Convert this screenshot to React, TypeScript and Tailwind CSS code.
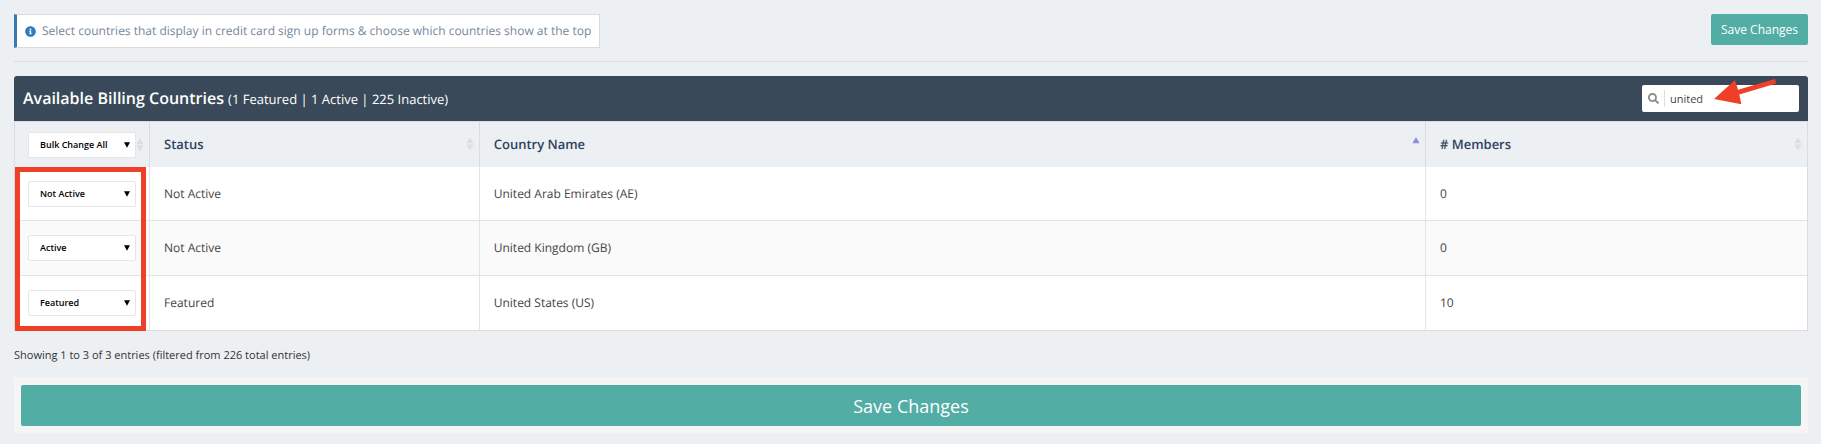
import { useState } from 'react';
import { FaInfoCircle, FaSearch } from 'react-icons/fa';

type Status = 'Not Active' | 'Active' | 'Featured';

interface Country {
  code: string;
  name: string;
  status: Status;
  selected: Status;
  members: number;
}

const statuses: Status[] = ['Not Active', 'Active', 'Featured'];

const countries: Country[] = [
  { code: 'AE', name: 'United Arab Emirates', status: 'Not Active', selected: 'Not Active', members: 0 },
  { code: 'GB', name: 'United Kingdom', status: 'Not Active', selected: 'Active', members: 0 },
  { code: 'US', name: 'United States', status: 'Featured', selected: 'Featured', members: 10 },
];

interface StatusSelectProps {
  label: string;
  options: string[];
  defaultValue: string;
}

function StatusSelect({ label, options, defaultValue }: StatusSelectProps) {
  return (
    <div className="relative w-[108px]">
      <select
        aria-label={label}
        defaultValue={defaultValue}
        className="block h-[26px] w-full appearance-none rounded-xs border border-[#e6e6e6] bg-white pr-5 pl-[11px] text-[9px] font-semibold text-black"
      >
        {options.map((option) => (
          <option key={option}>{option}</option>
        ))}
      </select>
      <svg viewBox="0 0 6 6" className="pointer-events-none absolute top-[10px] right-[6px] h-[6px] w-[6px]">
        <path d="M0 0.3H6L3 5.8Z" fill="#000" />
      </svg>
    </div>
  );
}

function SortIcon({ ascending = false }: { ascending?: boolean }) {
  return (
    <svg viewBox="0 0 8 14" className="h-[14px] w-[8px] shrink-0">
      <path d="M4 0L7.6 6.3H0.4Z" fill={ascending ? '#8b8fe0' : '#dcdee0'} />
      {!ascending && <path d="M0.4 7.5H7.6L4 13.7Z" fill="#dcdee0" />}
    </svg>
  );
}

export default function App() {
  const [search, setSearch] = useState('united');

  return (
    <div className="min-h-screen bg-[#ecf0f3] pt-[14px] pr-[13px] pb-[10px] pl-[14px] font-['Open_Sans',sans-serif] text-xs text-[#444] [text-rendering:geometricPrecision]">
      {/* Hint and save */}
      <div className="flex items-start justify-between border-b border-[#dcdfe2] pb-[13px]">
        <p className="flex h-[34px] items-center gap-[6px] border border-l-3 border-[#dadada] border-l-[#337ab7] bg-white px-2 text-[#75879a]">
          <FaInfoCircle className="h-[11px] w-[11px] text-[#2f7cbf]" />
          Select countries that display in credit card sign up forms &amp; choose which countries show at the top
        </p>
        <button className="h-[31px] rounded-xs bg-[#52ada4] px-[10px] text-xs font-medium text-white">
          Save Changes
        </button>
      </div>

      {/* Countries table */}
      <section className="mt-[14px]">
        <div className="flex h-[45px] items-center justify-between rounded-t-[3px] bg-[#394959] pr-[9px] pl-[9px] text-white">
          <h1 className="pb-[2px] text-base font-semibold">
            Available Billing Countries{' '}
            <small className="text-[13px] font-medium">(1 Featured | 1 Active | 225 Inactive)</small>
          </h1>
          <div className="relative flex h-[27px] w-[157px] items-center rounded-xs bg-white pl-[6px]">
            <FaSearch className="h-[11px] w-[11px] shrink-0 text-[#888]" />
            <input
              type="text"
              aria-label="Search countries"
              value={search}
              onChange={(e) => setSearch(e.target.value)}
              className="ml-[5px] h-[17px] w-full min-w-0 border-l border-[#ddd] pl-[5px] text-[11px] text-[#444] outline-none"
            />
            <svg viewBox="0 0 63 26" className="pointer-events-none absolute -top-[6px] left-[72px] h-[26px] w-[63px]">
              <path d="M0 20L21 1L24 10.8L61 0L62.2 4.5L25.3 15.4L27.4 25.2Z" fill="#ee4027" />
            </svg>
          </div>
        </div>

        <div className="relative">
          <table className="w-full table-fixed border-separate border-spacing-0 border border-[#dadcde] text-left">
            <colgroup>
              <col className="w-[135px]" />
              <col className="w-[18.4%]" />
              <col className="w-[52.8%]" />
              <col />
            </colgroup>
            <thead className="text-[13px] text-[#2f4260]">
              <tr className="h-[45px]">
                <th className="border-r border-[#dadcde] pr-[5px] pl-[13px]">
                  <div className="flex items-center justify-between">
                    <StatusSelect
                      label="Bulk change all countries"
                      options={['Bulk Change All', ...statuses]}
                      defaultValue="Bulk Change All"
                    />
                    <SortIcon />
                  </div>
                </th>
                <th className="border-r border-[#dadcde] pr-[5px] pl-[14px] font-semibold">
                  <div className="flex items-center justify-between">
                    Status
                    <SortIcon />
                  </div>
                </th>
                <th aria-sort="ascending" className="border-r border-[#dadcde] pr-[5px] pl-[14px] font-semibold">
                  <div className="flex items-center justify-between">
                    Country Name
                    <SortIcon ascending />
                  </div>
                </th>
                <th className="pr-[5px] pl-[14px] font-semibold">
                  <div className="flex items-center justify-between">
                    # Members
                    <SortIcon />
                  </div>
                </th>
              </tr>
            </thead>
            <tbody className="[&_td]:border-[#e4e4e4] [&>tr:not(:last-child)>td]:border-b">
              {countries.map((country) => (
                <tr key={country.code} className="h-[54px] bg-white even:h-[55px] even:bg-[#fafafa]">
                  <td className="border-r pl-[13px]">
                    <StatusSelect
                      label={`Status for ${country.name}`}
                      options={statuses}
                      defaultValue={country.selected}
                    />
                  </td>
                  <td className="border-r pl-[14px]">{country.status}</td>
                  <td className="border-r pl-[14px]">
                    {country.name} ({country.code})
                  </td>
                  <td className="pl-[14px]">{country.members}</td>
                </tr>
              ))}
            </tbody>
          </table>
          {/* Highlight around the status pickers */}
          <div className="pointer-events-none absolute top-[46px] bottom-0 left-px w-[131px] border-5 border-[#ee4027]" />
        </div>
      </section>

      <p className="mt-[17px] text-[11px] leading-4 text-[#333]">
        Showing 1 to 3 of 3 entries (filtered from 226 total entries)
      </p>

      <div className="mt-[13px] bg-[#f5f5f5] px-[7px] pt-2 pb-[7px]">
        <button className="block h-[41px] w-full rounded-xs bg-[#52ada4] text-lg font-medium text-white">
          Save Changes
        </button>
      </div>
    </div>
  );
}
